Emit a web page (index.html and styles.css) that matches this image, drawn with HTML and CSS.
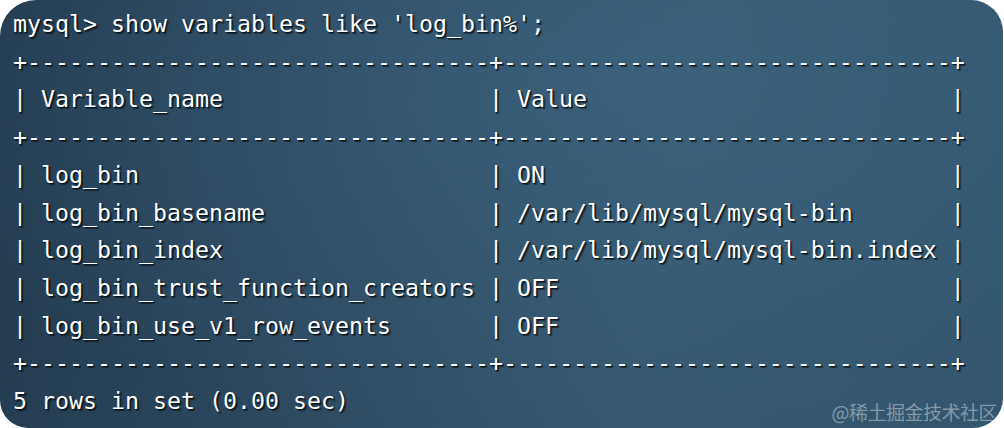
FILE: index.html
```html
<!DOCTYPE html>
<html lang="en">
<head>
<meta charset="utf-8">
<title>mysql show variables</title>
<link rel="stylesheet" href="styles.css">
</head>
<body>
<div class="terminal">
<div class="output">
<div class="line">mysql&gt; show variables like 'log_bin%';</div>
<div class="line">+---------------------------------+--------------------------------+</div>
<div class="line">| Variable_name                   | Value                          |</div>
<div class="line">+---------------------------------+--------------------------------+</div>
<div class="line">| log_bin                         | ON                             |</div>
<div class="line">| log_bin_basename                | /var/lib/mysql/mysql-bin       |</div>
<div class="line">| log_bin_index                   | /var/lib/mysql/mysql-bin.index |</div>
<div class="line">| log_bin_trust_function_creators | OFF                            |</div>
<div class="line">| log_bin_use_v1_row_events       | OFF                            |</div>
<div class="line">+---------------------------------+--------------------------------+</div>
<div class="line">5 rows in set (0.00 sec)</div>
</div>
<span class="watermark">@稀土掘金技术社区</span>
</div>
</body>
</html>
```
FILE: styles.css
```css
html, body {
  margin: 0;
  padding: 0;
  background: #ffffff;
}
.terminal {
  position: relative;
  width: 1003px;
  height: 428px;
  box-sizing: border-box;
  padding: 5px 0 0 13px;
  border-radius: 36px 32px 30px 28px;
  background:
    radial-gradient(ellipse 75% 90% at 62% 18%, rgba(64,104,134,0.55) 0%, rgba(64,104,134,0) 100%),
    linear-gradient(100deg, #223a4e 0%, #2d4a61 35%, #36586f 65%, #33556d 100%);
  overflow: hidden;
}
.output {
  display: flex;
  flex-direction: column;
  align-items: flex-start;
  font-family: "DejaVu Sans Mono", monospace;
  font-size: 23.25px;
  line-height: 37.7px;
  color: #ffffff;
  text-shadow: 1px 1px 1px #0a141c, 2px 2px 1px rgba(0,0,0,0.45);
}
.line {
  white-space: pre;
}
.watermark {
  position: absolute;
  right: 6px;
  bottom: 7px;
  font-family: "Noto Sans CJK SC", sans-serif;
  font-size: 19px;
  line-height: 1;
  color: rgba(200,210,220,0.55);
  letter-spacing: -0.5px;
}
```
